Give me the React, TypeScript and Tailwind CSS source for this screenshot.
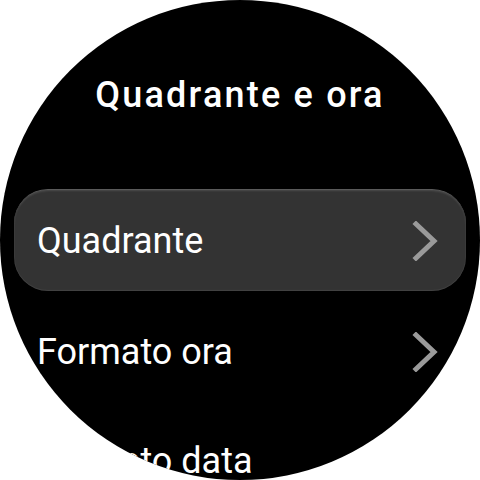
export default function App() {
  const items = ["Quadrante", "Formato ora", "Formato data"];
  return (
    <div className="w-[480px] h-[480px] bg-white" style={{ fontFamily: "Roboto, sans-serif" }}>
      <div className="w-[480px] h-[480px] rounded-full bg-black overflow-hidden flex flex-col">
        <h1 className="mt-[73px] text-center text-white text-[36px] leading-[44px] font-medium tracking-[2.2px]">
          Quadrante e ora
        </h1>
        <div className="mt-[72px] flex flex-col px-[14px]">
          {items.map((label, i) => (
            <div
              key={label}
              className={
                i === 0
                  ? "h-[102px] shrink-0 flex items-center justify-between pl-[23px] pr-[28px] rounded-[34px] bg-[#333333] border-t border-[#5a5a5a] shadow-[inset_0_1px_2px_rgba(255,255,255,0.12),inset_0_-1px_1px_rgba(255,255,255,0.08)]"
                  : "h-[112px] shrink-0 flex items-center justify-between pl-[23px] pr-[28px]"
              }
              style={i === 1 ? { marginTop: 8, height: 106 } : undefined}
            >
              <span className="text-white text-[36px] leading-none">{label}</span>
              <svg width="26" height="40" viewBox="0 0 26 40" fill="none">
                <path d="M4 3 L22 20 L4 37" stroke="#9a9a9a" strokeWidth="5" strokeLinecap="square" />
              </svg>
            </div>
          ))}
        </div>
      </div>
    </div>
  );
}
